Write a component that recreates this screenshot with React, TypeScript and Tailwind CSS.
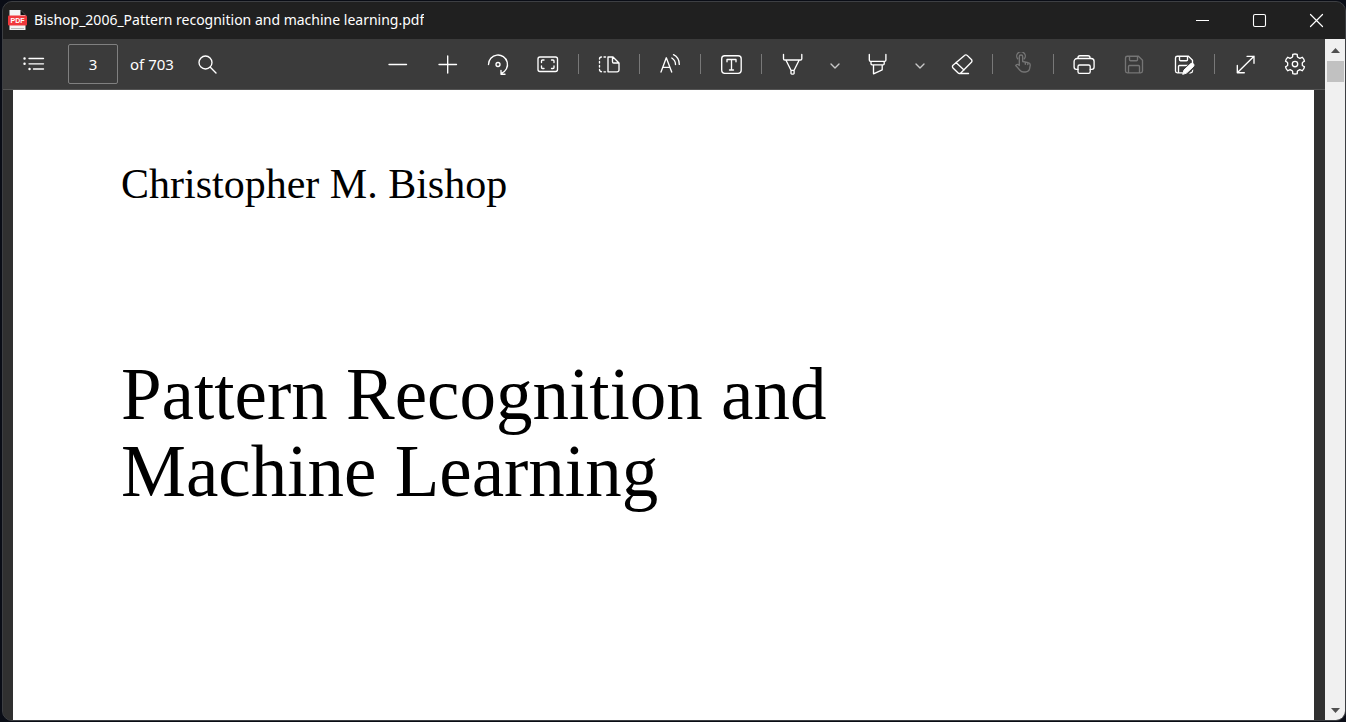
import type { ReactNode } from "react";

function Icon({ children, size = 24 }: { children: ReactNode; size?: number }) {
  return (
    <svg
      width={size}
      height={size}
      viewBox={`0 0 ${size} ${size}`}
      fill="none"
      stroke="currentColor"
      strokeWidth="1.35"
      strokeLinecap="round"
      strokeLinejoin="round"
      aria-hidden="true"
      className="shrink-0"
    >
      {children}
    </svg>
  );
}

function ToolButton({ label, children, disabled = false }: { label: string; children: ReactNode; disabled?: boolean }) {
  return (
    <button
      type="button"
      aria-label={label}
      disabled={disabled}
      className="flex h-10 w-[50px] shrink-0 items-center justify-center rounded text-white enabled:hover:bg-[#4a4a4a] disabled:text-[#757575]"
    >
      <Icon>{children}</Icon>
    </button>
  );
}

function MenuButton({ label }: { label: string }) {
  return (
    <button type="button" aria-label={label} className="flex h-10 w-[35px] shrink-0 items-center justify-center rounded pt-1 text-[#c8c8c8] hover:bg-[#4a4a4a]">
      <Icon size={16}>
        <path d="M4 6l4 4 4-4" />
      </Icon>
    </button>
  );
}

function Separator() {
  return <div className="mx-[5px] h-5 w-px shrink-0 bg-[#787878]" />;
}

const floppy = (
  <path d="M3.500 6a1.800 1.800 0 0 1 1.800-1.800H16.500l4 4V19a1.800 1.800 0 0 1-1.800 1.800H5.300A1.800 1.800 0 0 1 3.500 19zM7.500 4.500v3.200a1 1 0 0 0 1 1h6a1 1 0 0 0 1-1V4.500M6.500 20.500v-6a1 1 0 0 1 1-1h9a1 1 0 0 1 1 1v6" />
);

const gearOutline = (() => {
  const at = (deg: number, r: number) => {
    const a = ((deg - 90) * Math.PI) / 180;
    return `${(12 + r * Math.cos(a)).toFixed(2)} ${(12 + r * Math.sin(a)).toFixed(2)}`;
  };
  let d = "";
  for (let k = 0; k < 6; k++) {
    const t = k * 60;
    d += `${k === 0 ? "M" : "L"}${at(t - 13, 9.9)}Q${at(t, 10.4)} ${at(t + 13, 9.9)}L${at(t + 17, 8)}Q${at(t + 21, 6.9)} ${at(t + 30, 7.4)}Q${at(t + 39, 6.9)} ${at(t + 43, 8)}`;
  }
  return d + "Z";
})();

function TitleBar() {
  return (
    <header className="flex h-[37px] shrink-0 items-stretch bg-[#202020] pb-0.5 text-white">
      <div className="flex min-w-0 flex-1 items-center gap-[7px] pl-[5px]">
        <svg width="19" height="20" viewBox="0 0 19 20" aria-hidden="true" className="shrink-0">
          <path d="M1.500 0h11l5 5v15h-16z" fill="#f4f4f4" />
          <path d="M12.500 0l5 5h-5z" fill="#111" />
          <path d="M3 18.500h13" stroke="#bbb" />
          <rect x="0" y="5.500" width="19" height="10" rx="1" fill="#f0383c" />
          <text x="9.500" y="13" textAnchor="middle" fontSize="7" fontWeight="700" fill="#fff" fontFamily="Liberation Sans, sans-serif">PDF</text>
        </svg>
        <h1 className="truncate text-sm">Bishop_2006_Pattern recognition and machine learning.pdf</h1>
      </div>
      <div className="flex shrink-0">
        <button type="button" aria-label="Minimize" className="flex w-[57px] items-center justify-center hover:bg-[#333]">
          <Icon size={16}><path d="M1 8.500h13" strokeLinecap="butt" strokeWidth="1" /></Icon>
        </button>
        <button type="button" aria-label="Maximize" className="flex w-[57px] items-center justify-center hover:bg-[#333]">
          <Icon size={16}><rect x="1.500" y="2.500" width="12" height="12" rx="1.500" strokeWidth="1.100" /></Icon>
        </button>
        <button type="button" aria-label="Close" className="flex w-[57px] items-center justify-center hover:bg-[#c42b1c]">
          <Icon size={16}><path d="M1.500 2.500l12 12M13.500 2.500l-12 12" strokeWidth="1.200" /></Icon>
        </button>
      </div>
    </header>
  );
}

function Toolbar() {
  return (
    <div role="toolbar" aria-label="PDF tools" className="flex h-[51px] shrink-0 items-center justify-between border-b border-[#555] bg-[#3b3b3b] pr-[5px] pl-1.5 text-white">
      <div className="flex shrink-0 items-center">
        <ToolButton label="Contents">
          <path d="M7 6.500h14.500M7 11.800h14.500M11.500 17h10" />
          <path d="M2.500 6.500h.1M2.500 11.800h.1M7.500 17h.1" strokeWidth="2.400" />
        </ToolButton>
        <input
          aria-label="Page number"
          defaultValue="3"
          className="ml-[9px] h-10 w-[50px] rounded-xs border border-[#808080] bg-transparent text-center text-[15px] leading-5 text-white outline-none"
        />
        <span className="ml-3 w-[52px] text-[15px] leading-5 whitespace-nowrap">of 703</span>
        <div className="flex">
          <ToolButton label="Find">
            <circle cx="10.500" cy="10.500" r="6.500" />
            <path d="M15.300 15.300L21 21" />
          </ToolButton>
        </div>
      </div>
      <div className="flex shrink-0 items-center">
        <ToolButton label="Zoom out"><path d="M3 12.500h17.500" /></ToolButton>
        <ToolButton label="Zoom in"><path d="M3 12.500h17.500M11.700 4v17" /></ToolButton>
        <ToolButton label="Rotate">
          <path d="M2.500 12.500a9.500 9.500 0 1 1 13 8.800M15 18.500v3.700h4" />
          <circle cx="12" cy="12.500" r="2" />
        </ToolButton>
        <ToolButton label="Fit to page">
          <rect x="2" y="5" width="19.500" height="14.500" rx="2" />
          <path d="M5.500 10.500V9a1 1 0 0 1 1-1H8M15.500 8H17a1 1 0 0 1 1 1v1.500M18 14v1.500a1 1 0 0 1-1 1h-1.500M8 16.500H6.500a1 1 0 0 1-1-1V14" />
        </ToolButton>
        <Separator />
        <ToolButton label="Page view">
          <path d="M11 5h5l6 6v7a1.800 1.800 0 0 1-1.800 1.800H11zM15.500 5v4.800a1.200 1.200 0 0 0 1.200 1.200H22" />
          <path d="M8.500 5H7M4.500 5a2 2 0 0 0-2 2M2.500 9.500V11M2.500 13.500V15M2.500 17.500a2 2 0 0 0 2 2.200M7 19.800h1.500" />
        </ToolButton>
        <Separator />
        <ToolButton label="Read aloud">
          <path d="M3 20L8.300 5.800 13.700 20M4.800 15.300h7M15.500 2.700c3.200 1.600 5.800 5.300 5.800 9.700M13.800 6c2.100 1.300 3.700 3.700 3.700 6.500" />
        </ToolButton>
        <Separator />
        <ToolButton label="Add text">
          <rect x="2.700" y="3.700" width="19.500" height="17.600" rx="3" />
          <path d="M8 9.700V7.500h9v2.200M12.500 7.500v10.500M10.500 18h4" />
        </ToolButton>
        <Separator />
        <ToolButton label="Draw">
          <path d="M3.500 2.500v4.200a1.300 1.300 0 0 0 1.300 1.300h15.700a1.300 1.300 0 0 0 1.300-1.300V2.500M6 8.300l5 10v3a.8.8 0 0 0 .8.800h1.500a.8.8 0 0 0 .8-.8v-3l5-10M11 18.300h3.100" />
        </ToolButton>
        <MenuButton label="Draw options" />
        <ToolButton label="Highlight">
          <path d="M4.300 2.500v5.500a1.300 1.300 0 0 0 1.300 1.300h14a1.300 1.300 0 0 0 1.300-1.300V2.500M6 9.500v2.300a1 1 0 0 0 1 1h11.200a1 1 0 0 0 1-1V9.500M8.500 13v8.800l8.700-4V13" />
        </ToolButton>
        <MenuButton label="Highlight options" />
        <ToolButton label="Erase">
          <path d="M14.500 3.400a1.900 1.900 0 0 1 2.700 0l4.200 4.200a1.900 1.900 0 0 1 0 2.700L11 20.700a2.200 2.200 0 0 1-3.100 0L3 15.900a1.900 1.900 0 0 1 0-2.700zM6 10.500l8 7.600M9.500 21.500h9" />
        </ToolButton>
        <Separator />
        <ToolButton label="Touch" disabled>
          <path d="M6.700 6.800a4.300 4.300 0 1 1 6.600 0" />
          <path d="M8.300 13.500V4.700a1.700 1.700 0 0 1 3.400 0V9.500l5.500 1.200a2.500 2.500 0 0 1 2 2.800l-.6 3.200a4.200 4.200 0 0 1-4.100 3.300h-1.800a5 5 0 0 1-3.800-1.800l-4.200-4.700c.8-1.600 2.300-1.400 3.600 0M14.300 10.500v1.700M16.800 11v1.600" />
        </ToolButton>
        <Separator />
        <ToolButton label="Print">
          <path d="M6 17.300H4.300a2.200 2.200 0 0 1-2.200-2.200V9.500a3 3 0 0 1 3-3h14a3 3 0 0 1 3 3v5.600a2.200 2.200 0 0 1-2.200 2.200h-1.700M6 6.500V5.700a2 2 0 0 1 2-2h8a2 2 0 0 1 2 2v.8" />
          <rect x="6" y="13" width="12.200" height="8.300" rx="1.600" />
        </ToolButton>
        <ToolButton label="Save" disabled>{floppy}</ToolButton>
        <ToolButton label="Save as">
          {floppy}
          <path d="M12 21.500l9-9" stroke="#3b3b3b" strokeWidth="7" strokeLinecap="butt" />
          <path d="M10.800 22l1.200-4 6.800-6.400a2 2 0 0 1 2.800 2.800l-6.800 6.400z" fill="currentColor" strokeWidth="1" />
        </ToolButton>
        <Separator />
        <ToolButton label="Enter full screen">
          <path d="M4.300 20.700L21 4.300M14 4.300h7v7M4.300 13.500v7.200h7" />
        </ToolButton>
        <ToolButton label="Settings">
          <path d={gearOutline} />
          <circle cx="12" cy="12" r="2.700" />
        </ToolButton>
      </div>
    </div>
  );
}

function ScrollRail() {
  return (
    <aside aria-label="Document scroll" className="flex w-5 shrink-0 flex-col items-center bg-[#f0f0f0] text-[#505050]">
      <button type="button" aria-label="Scroll up" className="flex h-[22px] w-full items-center justify-center">
        <svg width="9" height="5" viewBox="0 0 9 5" aria-hidden="true"><path d="M0 5l4.500-5L9 5z" fill="currentColor" /></svg>
      </button>
      <div className="h-[21px] w-[17px] bg-[#c1c1c1]" />
      <button type="button" aria-label="Scroll down" className="mt-auto flex h-5 w-full items-center justify-center">
        <svg width="9" height="5" viewBox="0 0 9 5" aria-hidden="true"><path d="M0 0l4.500 5L9 0z" fill="currentColor" /></svg>
      </button>
    </aside>
  );
}

export default function App() {
  return (
    <div className="flex h-screen flex-col bg-[#0a0d16] py-px pl-0.5 font-['Noto_Sans','Open_Sans',sans-serif]">
      <div className="flex min-h-0 flex-1 flex-col overflow-hidden rounded-[10px] border border-[#3d3f43] bg-[#303030]">
        <TitleBar />
        <div className="flex min-h-0 flex-1">
          <main className="flex min-w-0 flex-1 flex-col">
            <Toolbar />
            <div className="min-h-0 flex-1 overflow-hidden bg-[#303030] pr-[11px] pl-2.5">
              <article className="min-h-full bg-white px-[108px] pt-[70px] font-['Liberation_Serif',serif] text-black">
                <p className="text-[42px] leading-[48px]">Christopher M. Bishop</p>
                <h2 className="mt-[148px] text-[73px] leading-[77px]">
                  Pattern Recognition and
                  <br />
                  Machine Learning
                </h2>
              </article>
            </div>
          </main>
          <ScrollRail />
        </div>
      </div>
    </div>
  );
}
